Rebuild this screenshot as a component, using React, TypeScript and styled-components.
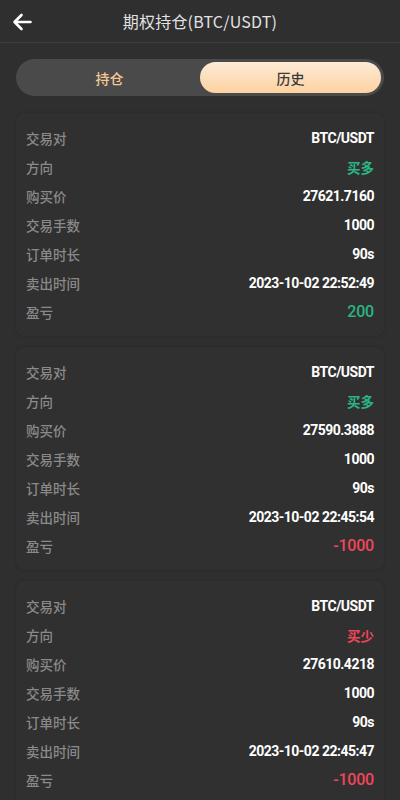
import React, { useState } from "react";
import styled, { createGlobalStyle } from "styled-components";

const GlobalStyle = createGlobalStyle`
  html, body {
    margin: 0;
    padding: 0;
    background: #2f2f2f;
  }
  * {
    box-sizing: border-box;
  }
`;

const Page = styled.div`
  width: 400px;
  min-height: 800px;
  background: #2f2f2f;
  font-family: "Noto Sans CJK SC", Roboto, sans-serif;
  overflow: hidden;
`;

const Header = styled.div`
  position: relative;
  height: 43px;
  display: flex;
  align-items: center;
  justify-content: center;
  border-bottom: 1px solid #3c3c3c;
`;

const BackBtn = styled.button`
  position: absolute;
  left: 11px;
  top: 11px;
  width: 22px;
  height: 22px;
  padding: 0;
  border: none;
  background: none;
  display: flex;
  align-items: center;
  justify-content: center;
`;

const Title = styled.h1`
  margin: 0;
  font-size: 16px;
  font-weight: 400;
  color: #e2e2e2;
  letter-spacing: 0.2px;
`;

const Tabs = styled.div`
  margin: 16px 16px 0;
  height: 37px;
  border-radius: 19px;
  background: #4a4a4a;
  padding: 3px;
  display: flex;
`;

const Tab = styled.div<{ $active?: boolean }>`
  flex: 1;
  border-radius: 16px;
  display: flex;
  align-items: center;
  justify-content: center;
  font-size: 14px;
  font-weight: 500;
  color: ${({ $active }) => ($active ? "#3a3a3a" : "#f2c796")};
  background: ${({ $active }) =>
    $active ? "linear-gradient(180deg, #fdebd6 0%, #fdd2a0 100%)" : "transparent"};
`;

const List = styled.div`
  padding: 17px 16px 0;
  display: flex;
  flex-direction: column;
  gap: 11px;
`;

const Card = styled.div`
  background: #303030;
  border-radius: 8px;
  box-shadow: 0 0 3px rgba(0, 0, 0, 0.18);
  padding: 10px;
`;

const Row = styled.div`
  height: 29px;
  display: flex;
  align-items: center;
  justify-content: space-between;
`;

const Label = styled.span`
  font-size: 13.5px;
  font-weight: 500;
  color: #8a8a8a;
`;

const Value = styled.span<{ $color?: string; $big?: boolean }>`
  font-family: Roboto, "Noto Sans CJK SC", sans-serif;
  font-size: ${({ $big }) => ($big ? "16px" : "14px")};
  font-weight: ${({ $big }) => ($big ? 500 : 700)};
  letter-spacing: ${({ $big }) => ($big ? "-0.2px" : "-0.5px")};
  color: ${({ $color }) => $color || "#ffffff"};
`;

const CnValue = styled(Value)`
  font-family: "Noto Sans CJK SC", sans-serif;
  font-size: 13.5px;
  letter-spacing: 0;
`;

const GREEN = "#2bb584";
const RED = "#f1465a";

type Order = {
  price: string;
  side: "买多" | "买少";
  time: string;
  pnl: string;
};

const orders: Order[] = [
  { price: "27621.7160", side: "买多", time: "2023-10-02 22:52:49", pnl: "200" },
  { price: "27590.3888", side: "买多", time: "2023-10-02 22:45:54", pnl: "-1000" },
  { price: "27610.4218", side: "买少", time: "2023-10-02 22:45:47", pnl: "-1000" },
];

const BackIcon = () => (
  <svg width="20" height="18" viewBox="0 0 20 18" fill="none">
    <path
      d="M18.5 9H2.5M9.5 2L2.5 9L9.5 16"
      stroke="#ffffff"
      strokeWidth="2.6"
      strokeLinecap="round"
      strokeLinejoin="round"
    />
  </svg>
);

const App = () => {
  const [tab, setTab] = useState(1);

  return (
    <Page>
      <GlobalStyle />
      <Header>
        <BackBtn>
          <BackIcon />
        </BackBtn>
        <Title>期权持仓(BTC/USDT)</Title>
      </Header>
      <Tabs>
        <Tab $active={tab === 0} onClick={() => setTab(0)}>
          持仓
        </Tab>
        <Tab $active={tab === 1} onClick={() => setTab(1)}>
          历史
        </Tab>
      </Tabs>
      <List>
        {orders.map((o, i) => {
          const pnlColor = o.pnl.startsWith("-") ? RED : GREEN;
          return (
            <Card key={i}>
              <Row>
                <Label>交易对</Label>
                <Value>BTC/USDT</Value>
              </Row>
              <Row>
                <Label>方向</Label>
                <CnValue $color={o.side === "买多" ? GREEN : RED}>{o.side}</CnValue>
              </Row>
              <Row>
                <Label>购买价</Label>
                <Value>{o.price}</Value>
              </Row>
              <Row>
                <Label>交易手数</Label>
                <Value>1000</Value>
              </Row>
              <Row>
                <Label>订单时长</Label>
                <Value>90s</Value>
              </Row>
              <Row>
                <Label>卖出时间</Label>
                <Value>{o.time}</Value>
              </Row>
              <Row>
                <Label>盈亏</Label>
                <Value $big $color={pnlColor}>
                  {o.pnl}
                </Value>
              </Row>
            </Card>
          );
        })}
      </List>
    </Page>
  );
};

export default App;
